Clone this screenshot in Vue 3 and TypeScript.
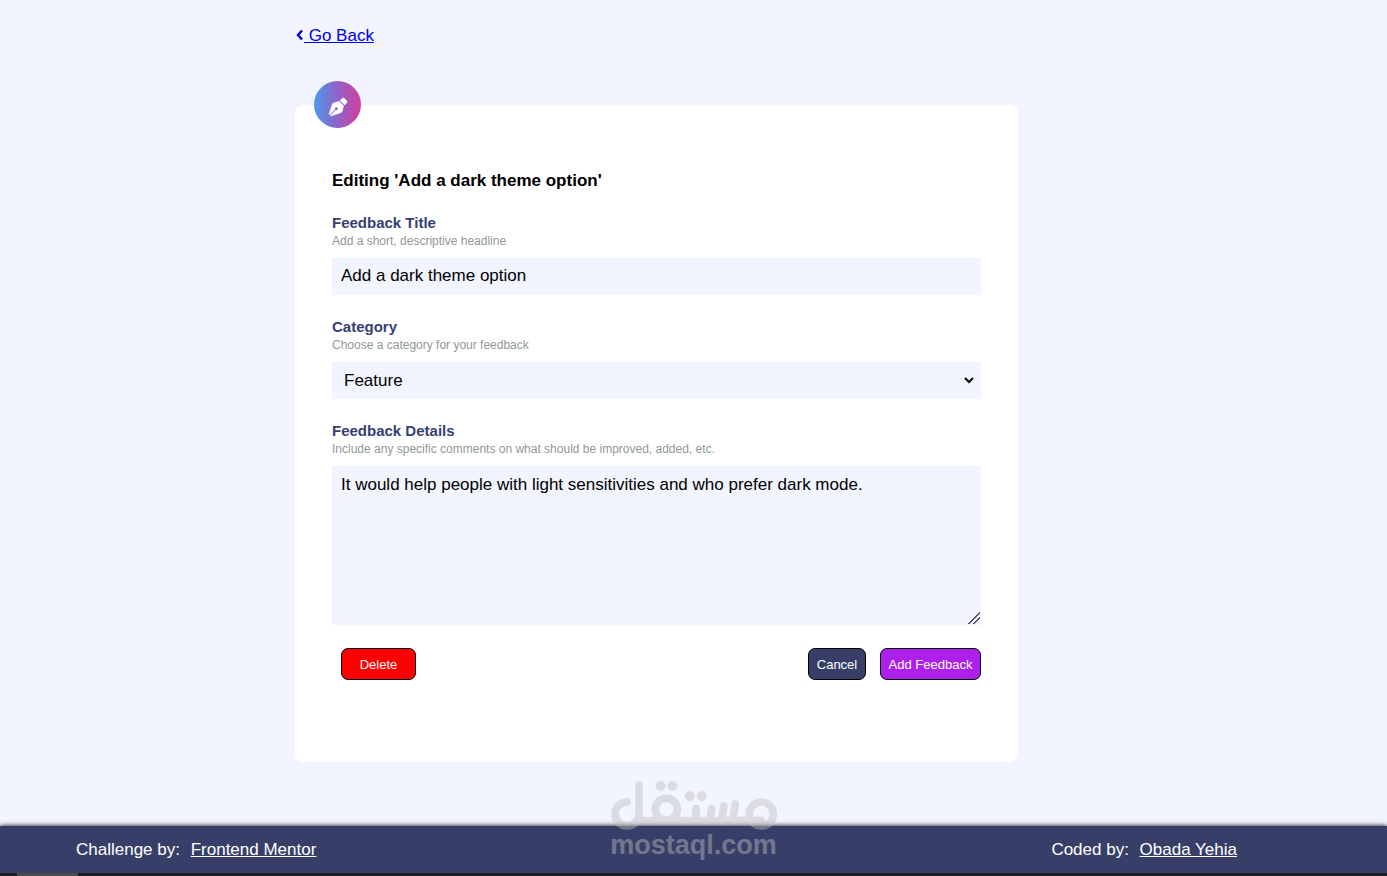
<script setup lang="ts">
import { ref } from 'vue'

const title = ref('Add a dark theme option')
const category = ref('Feature')
const details = ref('It would help people with light sensitivities and who prefer dark mode.')
const categories: string[] = ['Feature', 'UI', 'UX', 'Enhancement', 'Bug']
</script>

<template>
  <div class="page">
    <main class="content">
      <a class="back" href="#"><svg class="chevron" viewBox="0 0 8 12" aria-hidden="true"><path d="M6.500 1.500 2.500 6l4 4.500" /></svg><span class="back-text">&nbsp;Go Back</span></a>

      <form class="card" @submit.prevent>
        <div class="badge">
          <svg viewBox="0 0 512 512" aria-hidden="true">
            <path d="M136.600 138.790a64 64 0 0 0-43.310 41.350L0 460l14.690 14.690L164.800 324.580c-2.990-6.260-4.800-13.180-4.800-20.580 0-26.510 21.490-48 48-48s48 21.490 48 48-21.490 48-48 48c-7.400 0-14.320-1.810-20.580-4.800L37.310 497.310 52 512l279.860-93.290a64 64 0 0 0 41.350-43.310L416 224 288 96l-151.400 42.790zm361.340-64.640-60.090-60.090c-18.750-18.750-49.160-18.750-67.910 0l-56.550 56.550 128.020 128.020 56.550-56.550c18.720-18.760 18.720-49.170-.020-67.930z" />
          </svg>
        </div>

        <h1>Editing 'Add a dark theme option'</h1>

        <div class="field">
          <label for="title">Feedback Title</label>
          <p id="title-hint">Add a short, descriptive headline</p>
          <input id="title" v-model="title" class="control" type="text" aria-describedby="title-hint" />
        </div>

        <div class="field">
          <label for="category">Category</label>
          <p id="category-hint">Choose a category for your feedback</p>
          <select id="category" v-model="category" class="control" aria-describedby="category-hint">
            <option v-for="item in categories" :key="item">{{ item }}</option>
          </select>
        </div>

        <div class="field">
          <label for="details">Feedback Details</label>
          <p id="details-hint">Include any specific comments on what should be improved, added, etc.</p>
          <textarea id="details" v-model="details" class="control" aria-describedby="details-hint"></textarea>
        </div>

        <div class="actions">
          <button class="delete" type="button">Delete</button>
          <button class="cancel" type="button">Cancel</button>
          <button class="submit" type="submit">Add Feedback</button>
        </div>
      </form>
    </main>

    <footer class="footer">
      <p>Challenge by: <a href="#">Frontend Mentor</a></p>
      <p>Coded by: <a href="#">Obada Yehia</a></p>
    </footer>
    <div class="strip"><span class="strip-thumb"></span></div>

    <div class="watermark">
      <svg class="watermark-logo" viewBox="15 12 498 150" role="img" aria-label="مستقل">
        <g class="strokes">
          <path d="M63 78a36 36 0 1 0 36 36V27" />
          <line x1="99" y1="134" x2="466" y2="134" />
          <circle cx="181" cy="100" r="33" />
          <line x1="270" y1="98" x2="270" y2="134" />
          <line x1="317" y1="98" x2="311" y2="134" />
          <line x1="353" y1="90" x2="347" y2="134" />
          <line x1="388" y1="84" x2="381" y2="134" />
          <circle cx="466" cy="114" r="36" />
        </g>
        <g class="dots">
          <circle cx="164" cy="30" r="15" />
          <circle cx="199" cy="30" r="15" />
          <circle cx="251" cy="61" r="15" />
          <circle cx="287" cy="61" r="15" />
        </g>
      </svg>
      <span class="watermark-name">mostaql.com</span>
    </div>
  </div>
</template>

<style>
body {
  margin: 0;
  background: #f2f4ff;
}
</style>

<style scoped>
.page {
  position: relative;
  display: flex;
  flex-direction: column;
  min-height: 100vh;
  font-family: "Liberation Sans", Arial, sans-serif;
  font-size: 17px;
  line-height: 20px;
  color: #000;
}
.page *,
.page {
  box-sizing: border-box;
}
.content {
  flex: 1;
  display: flex;
  flex-direction: column;
  align-items: flex-start;
  width: 100%;
  max-width: 797px;
  margin: 0 auto;
  padding: 26px 74px 62px 0;
}
.back {
  display: flex;
  align-items: center;
  color: #0000ee;
  text-decoration: none;
}
.chevron {
  width: 9px;
  height: 12px;
  margin-bottom: 2px;
  fill: none;
  stroke: currentColor;
  stroke-width: 2.4;
}
.back-text {
  text-decoration: underline;
}
.card {
  position: relative;
  display: flex;
  flex-direction: column;
  gap: 23px;
  width: 100%;
  margin-top: 59px;
  padding: 66px 37px 82px;
  background: #fff;
  border-radius: 8px;
}
.badge {
  position: absolute;
  top: -24px;
  left: 19px;
  display: flex;
  align-items: center;
  justify-content: center;
  width: 47px;
  height: 47px;
  padding-top: 4px;
  border-radius: 50%;
  background: linear-gradient(90deg, #4b9bec, #8b66cc 45%, #d23f9d);
}
.badge svg {
  width: 18px;
  height: 18px;
  overflow: visible;
  fill: #fff;
  stroke: #fff;
  stroke-width: 14;
}
h1 {
  margin: 0;
  font-size: 17px;
  line-height: 20px;
}
.field {
  display: flex;
  flex-direction: column;
}
label {
  font-size: 15px;
  font-weight: 700;
  line-height: 18px;
  color: #373f75;
}
.field p {
  margin: 1px 0 9px;
  font-size: 12px;
  line-height: 16px;
  color: #8f9899;
}
.control {
  width: 100%;
  height: 37px;
  margin: 0;
  padding: 8px 9px;
  border: 0;
  border-radius: 0;
  background: #f2f4ff;
  color: #000;
  font: inherit;
}
input.control {
  padding: 7px 9px 9px;
}
select.control {
  padding: 0 8px;
  border-right: 4px solid #f2f4ff;
}
textarea.control {
  display: block;
  height: 159px;
  padding-top: 9px;
  resize: vertical;
}
textarea.control::-webkit-resizer {
  background:
    linear-gradient(135deg, transparent 54%, #4c5470 54%, #4c5470 62%, transparent 62%, transparent 74%, #4c5470 74%, #4c5470 82%, transparent 82%)
    0 0 / 14px 14px no-repeat;
}
.actions {
  display: flex;
  gap: 14px;
  padding-left: 9px;
}
button {
  height: 32px;
  padding: 0 7px;
  border: 1px solid #000;
  border-radius: 7px;
  color: #fff;
  font-family: inherit;
  font-size: 13px;
}
.delete {
  min-width: 75px;
  margin-right: auto;
  background: #ff0000;
}
.cancel {
  min-width: 58px;
  background: #373f68;
}
.submit {
  min-width: 101px;
  background: #ad1fea;
}
.footer {
  display: flex;
  justify-content: space-between;
  padding: 14px 150px 13px 76px;
  background: #373f68;
  box-shadow: 0 0 5px #000;
  color: #fff;
}
.footer p {
  margin: 0;
}
.footer a {
  margin-left: 6px;
  color: #fff;
}
.strip {
  height: 3px;
  padding-left: 17px;
  background: #1e1c20;
}
.strip-thumb {
  display: block;
  width: 61px;
  height: 3px;
  background: #4b494b;
}
.watermark {
  position: absolute;
  bottom: 16px;
  left: 50%;
  display: flex;
  flex-direction: column;
  align-items: center;
  width: 168px;
  margin-left: -84px;
  color: #bfbfbf;
  opacity: 0.44;
  pointer-events: none;
}
.watermark-logo {
  width: 166px;
  height: 50px;
}
.strokes {
  fill: none;
  stroke: currentColor;
  stroke-width: 23;
  stroke-linecap: round;
}
.dots {
  fill: currentColor;
}
.watermark-name {
  font-size: 27px;
  font-weight: 700;
  line-height: 30px;
}
</style>
